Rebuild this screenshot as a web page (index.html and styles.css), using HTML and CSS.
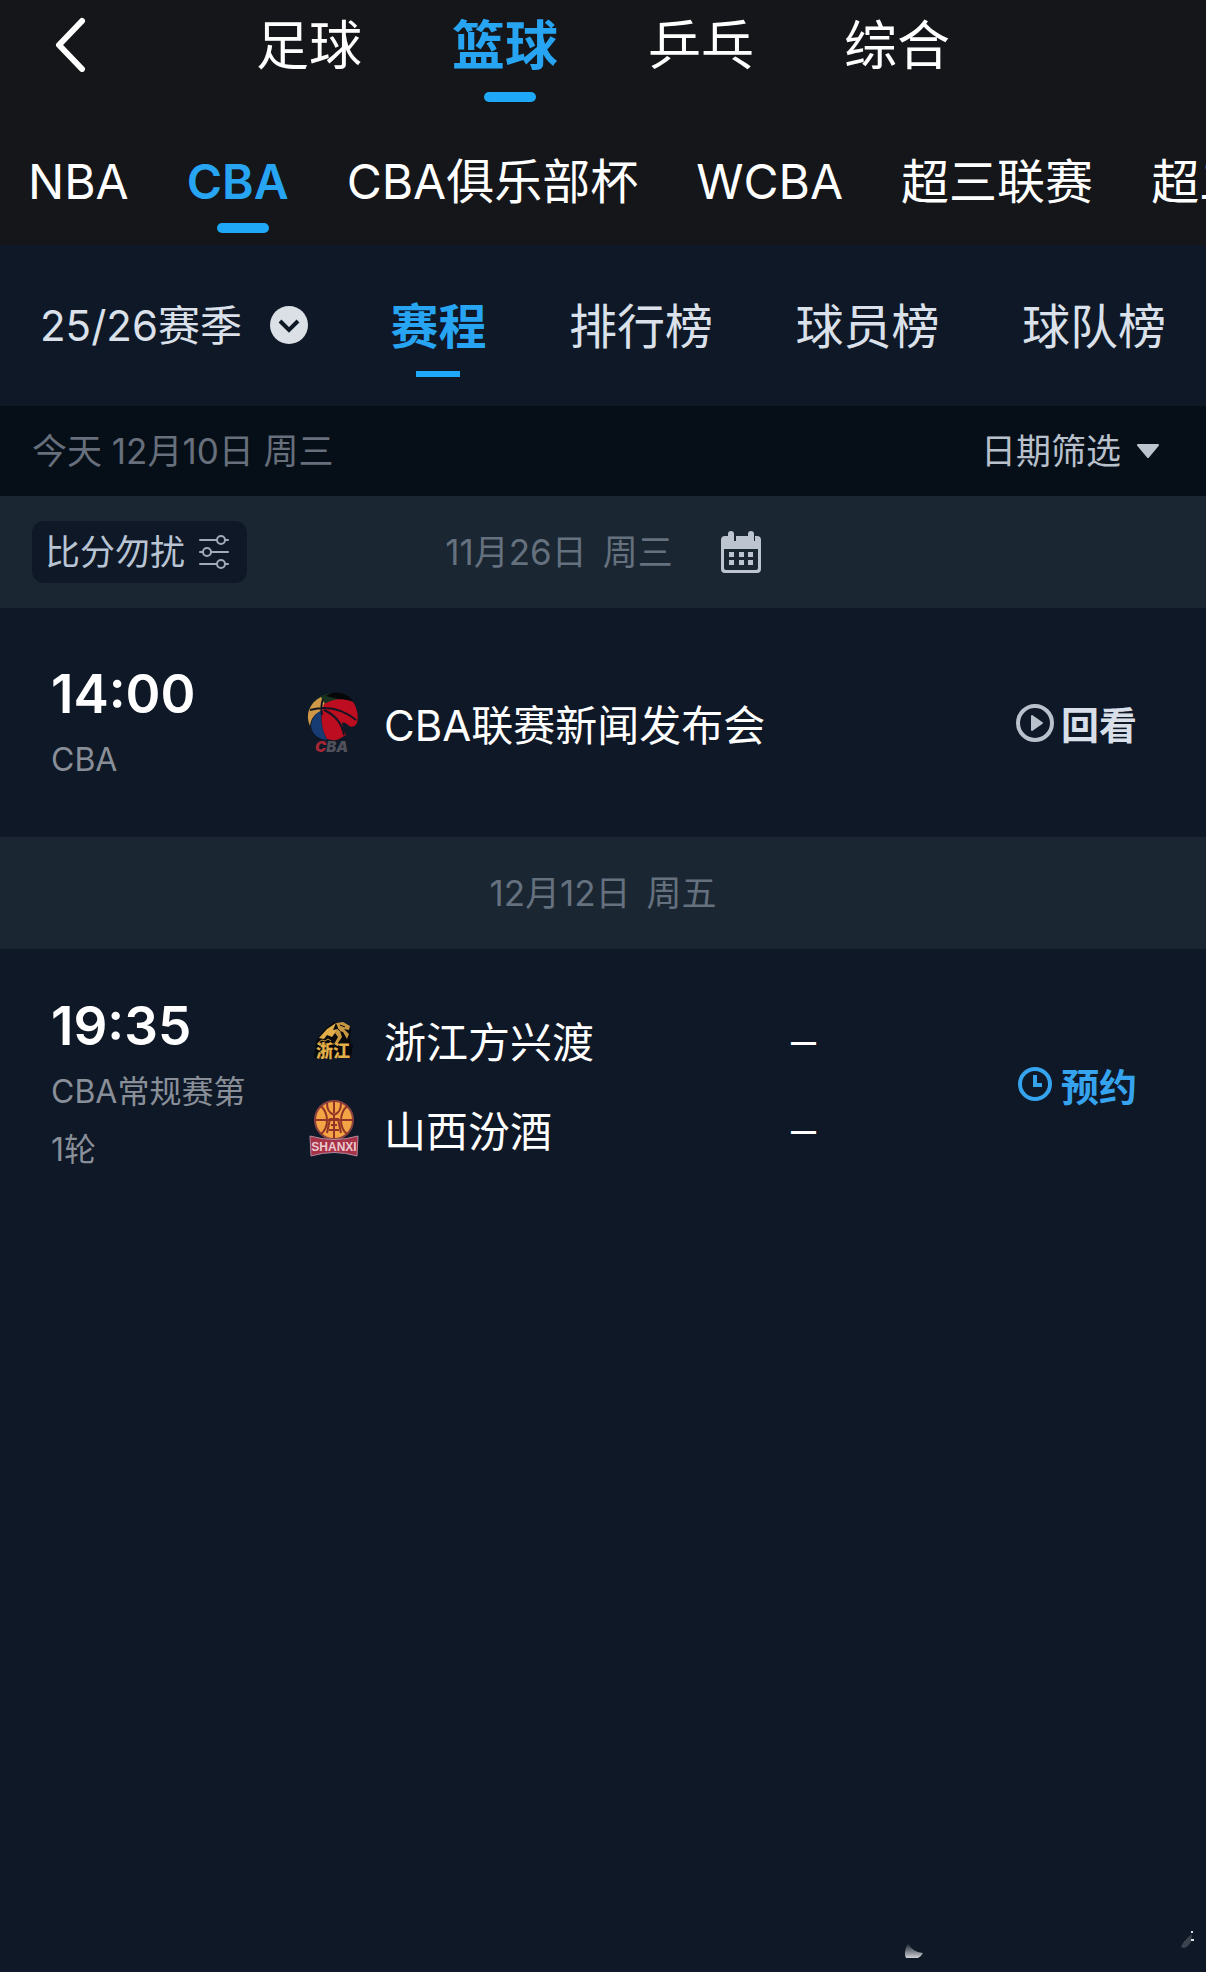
FILE: index.html
```
<!DOCTYPE html>
<html lang="zh-CN">
<head>
    <meta charset="UTF-8">
    <meta name="viewport" content="width=device-width, initial-scale=1.0">
    <title>CBA 赛程</title>
    <link rel="stylesheet" href="styles.css">
</head>
<body>
    <header class="top">
        <nav class="sports">
            <button class="back" type="button" aria-label="返回">
                <svg width="32" height="56" viewBox="0 0 32 56"><path d="M27 5 4 29 27 53" fill="none" stroke="#fff" stroke-width="6" stroke-linecap="round" stroke-linejoin="round"/></svg>
            </button>
            <a class="tab" href="#">足球</a>
            <a class="tab active" href="#">篮球</a>
            <a class="tab" href="#">乒乓</a>
            <a class="tab" href="#">综合</a>
        </nav>
        <nav class="leagues">
            <a class="tab" href="#">NBA</a>
            <a class="tab active" href="#">CBA</a>
            <a class="tab" href="#">CBA俱乐部杯</a>
            <a class="tab" href="#">WCBA</a>
            <a class="tab" href="#">超三联赛</a>
            <a class="tab" href="#">超二联赛</a>
        </nav>
    </header>

    <nav class="sections">
        <label class="season">
            <select aria-label="赛季">
                <option>25/26赛季</option>
            </select>
            <svg width="38" height="38" viewBox="0 0 38 38"><circle cx="19" cy="19" r="19" fill="#dbe0e6"/><path d="M10 15l9 9 9-9" fill="none" stroke="#0f1926" stroke-width="4"/></svg>
        </label>
        <a class="tab active" href="#">赛程</a>
        <a class="tab" href="#">排行榜</a>
        <a class="tab" href="#">球员榜</a>
        <a class="tab" href="#">球队榜</a>
    </nav>

    <div class="today">
        <span class="label">今天 12月10日 周三</span>
        <label class="date-filter">
            <select aria-label="日期筛选">
                <option>日期筛选</option>
            </select>
            <svg width="24" height="14" viewBox="0 0 24 14"><path d="M2 1h20L12 13z" fill="#bcc4d0" stroke="#bcc4d0" stroke-width="2" stroke-linejoin="round"/></svg>
        </label>
    </div>

    <main>
        <section>
            <div class="day">
                <button class="quiet" type="button">
                    <span class="label">比分勿扰</span>
                    <svg width="30" height="34" viewBox="0 0 30 34" fill="none" stroke="#9fabbb" stroke-width="2"><path d="M1 5h17M26 5h3M1 17h3M12 17h17M1 29h17M26 29h3" stroke-linecap="round"/><circle cx="22" cy="5" r="4"/><circle cx="8" cy="17" r="4"/><circle cx="22" cy="29" r="4"/></svg>
                </button>
                <h2 class="label"><span>11月26日</span> <span>周三</span></h2>
                <button class="calendar" type="button" aria-label="日历">
                    <svg width="40" height="42" viewBox="0 0 40 42" fill="#bcc4d0">
                        <path fill-rule="evenodd" d="M4 5h3V3a3 3 0 0 1 6 0v7h2V5h12V3a3 3 0 0 1 6 0v7h1V5h2a4 4 0 0 1 4 4v29a4 4 0 0 1-4 4H4a4 4 0 0 1-4-4V9a4 4 0 0 1 4-4zM3 18v19a2 2 0 0 0 2 2h30a2 2 0 0 0 2-2V18z"/>
                        <path d="M8 21h5v5H8zM18 21h5v5h-5zM27 21h5v5h-5zM8 29h5v5H8zM18 29h5v5h-5zM27 29h5v5h-5z"/>
                    </svg>
                </button>
            </div>
            <article class="match">
                <div class="when">
                    <time>14:00</time>
                    <p>CBA</p>
                </div>
                <div class="teams">
                    <div class="team">
                        <svg class="logo" width="52" height="62" viewBox="0 0 52 62">
                            <path d="M4 13C13-1 35-3 44 8L17 12z" fill="#17331f"/>
                            <path d="M19 4C27-2 39 0 46 9L31 7z" fill="#050608"/>
                            <path d="M14 5l4 7-2 6C8 21 4 26 3 34-2 23 2 11 14 5z" fill="#cf9846"/>
                            <path d="M4 34c1-8 5-13 10-15 0 10 1 19 6 29C11 47 5 42 4 34z" fill="#173b73"/>
                            <path d="M17 12c10-6 20-6 29-2 4 6 6 14 4 21-2 4-6 5-9 2-2-2-4-3-6-2l1 6 3 6-7 4c-4 2-8 1-12 0-6-10-7-24-3-35z" fill="#bd0d20"/>
                            <path d="M3 18c18-5 34 0 46 10M16 7c-2 5-2 10-1 16M17 18c11 5 18 13 20 25" fill="none" stroke="#141522" stroke-width="2"/>
                            <text x="8" y="60" class="logo-cba"><tspan fill="#a52736">C</tspan><tspan fill="#50505a">BA</tspan></text>
                        </svg>
                        <h3>CBA联赛新闻发布会</h3>
                    </div>
                </div>
                <button class="action" type="button">
                    <svg width="38" height="38" viewBox="0 0 38 38"><circle cx="19" cy="19" r="17" fill="none" stroke="#b9c1cd" stroke-width="4"/><path d="M16 12l10 7-10 7z" fill="#b9c1cd" stroke="#b9c1cd" stroke-width="2" stroke-linejoin="round"/></svg>
                    回看
                </button>
            </article>
        </section>

        <section>
            <div class="day">
                <h2 class="label"><span>12月12日</span> <span>周五</span></h2>
            </div>
            <article class="match">
                <div class="when">
                    <time>19:35</time>
                    <p>CBA常规赛第1轮</p>
                </div>
                <div class="teams">
                    <div class="team">
                        <svg class="logo" width="52" height="38" viewBox="0 0 52 38">
                            <path d="M9 20L18 8 27 1l9 1 8 5-1 10 1 6h2l-2 14H7l2-14z" fill="#07090c"/>
                            <path d="M12 17l8-9 9-6-3 7 5-1-6 8-5-2-3 4z" fill="#e2ae49"/>
                            <path d="M29 2l7-1 7 4-1 4-5-1 5 5-2 5-4-7-3-1 2 6-4 6-4 1 4-7-3-4 3-5z" fill="#c69641"/>
                            <path d="M33 4l5 2M30 7l3 3" stroke="#07090c" stroke-width="1"/>
                            <path d="M12 21l3-2 3 1 3-2 3 2M12 23h15" fill="none" stroke="#c69641" stroke-width="1"/>
                            <text x="9" y="36" class="logo-zj">浙江</text>
                        </svg>
                        <h3>浙江方兴渡</h3>
                        <span class="score">–</span>
                    </div>
                    <div class="team">
                        <svg class="logo" width="52" height="58" viewBox="0 0 52 58">
                            <circle cx="27" cy="20" r="19" fill="#f3a444" stroke="#8b4140" stroke-width="2"/>
                            <path d="M27 1v12M27 30v9M8 20h12M34 20h12M14 6c8 8 8 21 0 28M40 6c-8 8-8 21 0 28M20 3c0 7 2 10 7 12 5-2 7-5 7-12M20 33l3-14h8l3 14M21 20h12M24 25h6M22 30h10M27 15v14" fill="none" stroke="#913427" stroke-width="2"/>
                            <path d="M3 36q24 7 48 0l-1 20q-23-7-46 0z" fill="#a83247" stroke="#b58a9e" stroke-width="1"/>
                            <text x="27" y="51" text-anchor="middle" class="logo-sx">SHANXI</text>
                        </svg>
                        <h3>山西汾酒</h3>
                        <span class="score">–</span>
                    </div>
                </div>
                <button class="action book" type="button">
                    <svg width="38" height="38" viewBox="0 0 38 38" fill="none" stroke="#35a3ee" stroke-width="4"><circle cx="19" cy="19" r="15"/><path d="M19 10v10h7"/></svg>
                    预约
                </button>
            </article>
        </section>
    </main>

    <svg class="mark" width="292" height="30" viewBox="0 0 292 30" aria-hidden="true">
        <defs>
            <linearGradient id="fade" x1="0" y1="0" x2="0" y2="1"><stop offset="0" stop-color="#0f1926"/><stop offset="1" stop-color="#cfd2d6"/></linearGradient>
        </defs>
        <path d="M4 14q4 9 15 10-2 4-5 5H2q-3-6 2-15z" fill="url(#fade)"/>
        <path d="M277 18q2-6 11-13l-1 8q-3 5-7 6z" fill="#3b444e"/>
        <path d="M287 2h2v2h-2zM287 10h3v2h-3z" fill="#dfe2e5"/>
    </svg>
</body>
</html>
```
FILE: styles.css
```
* { box-sizing: border-box; }
body {
    position: relative;
    margin: 0;
    min-height: 100vh;
    overflow-x: hidden;
    font-family: Inter, 'Noto Sans CJK SC', sans-serif;
    background: #0f1826;
    color: #fff;
}
a { color: inherit; text-decoration: none; }
button, select {
    margin: 0;
    padding: 0;
    border: none;
    background: none;
    font: inherit;
    color: inherit;
    cursor: pointer;
}
select { appearance: none; }
svg { display: block; flex: none; }
h2, h3, p { margin: 0; font-weight: 400; }

/* tabs */
.tab {
    display: flex;
    flex-direction: column;
    align-items: center;
    flex: none;
    line-height: 60px;
    white-space: nowrap;
}
.tab.active { color: #27a5f3; font-weight: 700; }
.tab.active::after {
    content: "";
    width: 52px;
    height: 10px;
    border-radius: 5px;
    background: #1fa8f8;
}
.top { background: #151619; overflow: hidden; }
.top .tab.active::after { margin-left: 10px; }
.sports {
    display: flex;
    align-items: flex-start;
    gap: 90px;
    height: 104px;
    padding: 16px 55px 0;
    font-size: 53px;
}
.sports .tab::after { margin-top: 16px; }
.back { margin-right: 79px; }
.leagues {
    display: flex;
    gap: 58px;
    height: 141px;
    padding: 48px 0 0 28px;
    font-size: 48px;
}
.leagues .tab::after { margin-top: 11px; }
.leagues .tab.active { font-weight: 600; }

.sections {
    display: flex;
    align-items: flex-start;
    justify-content: space-between;
    height: 161px;
    padding: 52px 40px 0;
    font-size: 48px;
    color: #dbe1ea;
}
.sections .tab.active::after { width: 44px; height: 6px; margin-top: 14px; border-radius: 0; }
.season { display: flex; align-items: center; gap: 28px; height: 56px; font-size: 42px; }

.today {
    display: flex;
    align-items: center;
    justify-content: space-between;
    height: 90px;
    padding: 0 46px 0 32px;
    background: #060f18;
    font-size: 35px;
    color: #666f7b;
}
.date-filter { display: flex; align-items: center; gap: 14px; color: #b8c0cc; }
.label { padding-bottom: 6px; }

/* schedule */
.day {
    position: relative;
    display: flex;
    align-items: center;
    justify-content: center;
    gap: 48px;
    height: 112px;
    background: #1a2632;
    font-size: 35px;
    color: #65717e;
}
.day h2 { display: flex; gap: 16px; font-size: 35px; }
.quiet {
    position: absolute;
    left: 32px;
    display: flex;
    align-items: center;
    gap: 14px;
    height: 62px;
    padding: 0 18px 0 13px;
    border-radius: 12px;
    background: #0f1826;
    color: #b8c4d4;
}
.match {
    display: grid;
    grid-template-columns: 205px 1fr 270px;
    column-gap: 51px;
    align-items: center;
    min-height: 229px;
    padding: 40px 69px 40px 51px;
}
.when time { display: block; font-size: 53px; font-weight: 600; line-height: 74px; }
.when p { font-size: 32px; line-height: 58px; color: #898f98; word-break: break-all; }
.team { display: flex; align-items: center; gap: 25px; height: 89px; }
.team h3 { flex: 1; font-size: 42px; white-space: nowrap; }
.score { font-family: 'Liberation Sans', sans-serif; font-size: 45px; }
.action {
    display: flex;
    align-items: center;
    justify-self: end;
    gap: 7px;
    font-size: 38px;
    font-weight: 700;
    color: #d8dfe8;
}
.book { color: #35a3ee; }

.logo { overflow: visible; }
.logo-cba { font: italic 900 15px/1 Inter, sans-serif; }
.logo-zj { font: 900 17px 'Noto Sans CJK SC', sans-serif; fill: #e2ae49; }
.logo-sx { font: 700 12px 'Liberation Sans', sans-serif; fill: #e9c9cf; }
.mark { position: absolute; right: 10px; bottom: 13px; }
```
